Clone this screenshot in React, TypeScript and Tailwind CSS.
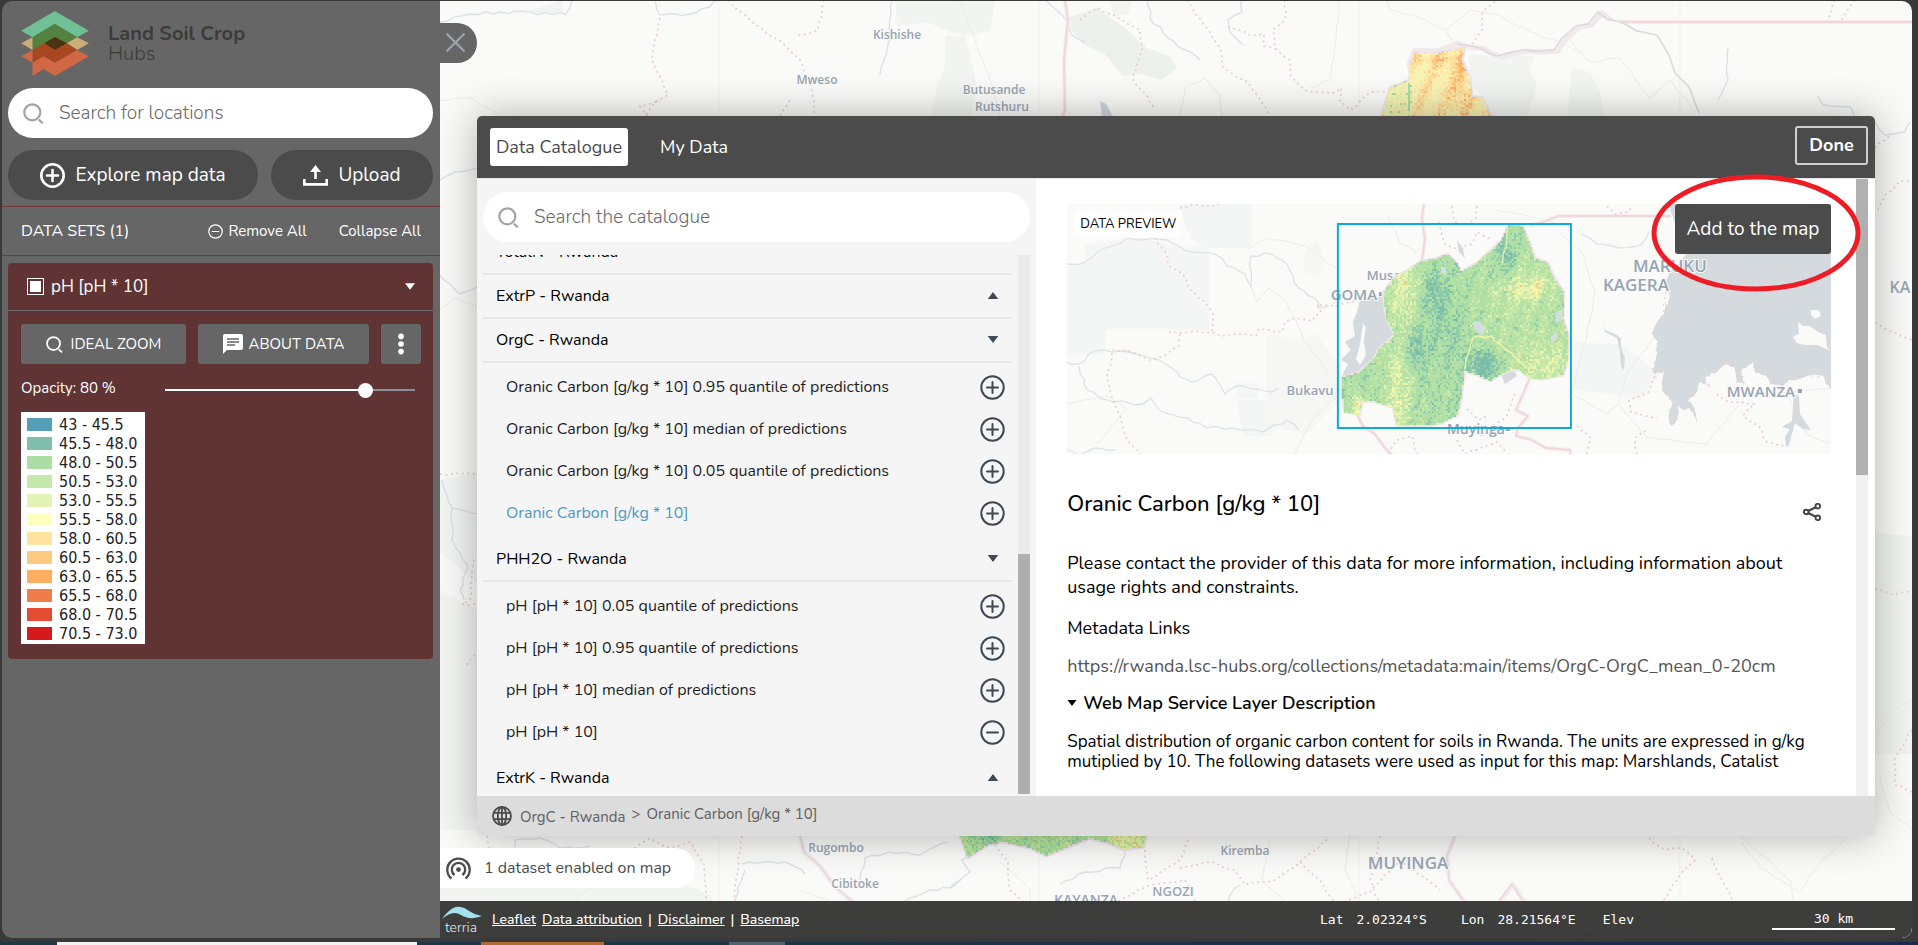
import type { ReactNode } from "react";

type Point = [number, number];

/* ---------- helpers for the map drawings ---------- */

function random(seed: number) {
  let s = seed;
  return () => {
    s = (s * 1664525 + 1013904223) % 4294967296;
    return s / 4294967296;
  };
}

function wiggle(points: Point[], amp: number, seed: number) {
  const rnd = random(seed);
  let d = `M${points[0][0]} ${points[0][1]}`;
  for (let i = 1; i < points.length; i++) {
    const [x0, y0] = points[i - 1];
    const [x1, y1] = points[i];
    const steps = Math.max(1, Math.round(Math.hypot(x1 - x0, y1 - y0) / 7));
    for (let k = 1; k <= steps; k++) {
      const t = k / steps;
      const j = k === steps ? 0 : amp;
      const x = x0 + (x1 - x0) * t + (rnd() - 0.5) * 2 * j;
      const y = y0 + (y1 - y0) * t + (rnd() - 0.5) * 2 * j;
      d += `L${x.toFixed(1)} ${y.toFixed(1)}`;
    }
  }
  return d;
}

function inside(poly: Point[], x: number, y: number) {
  let hit = false;
  for (let i = 0, j = poly.length - 1; i < poly.length; j = i++) {
    const [xi, yi] = poly[i];
    const [xj, yj] = poly[j];
    if (yi > y !== yj > y && x < ((xj - xi) * (y - yi)) / (yj - yi) + xi) hit = !hit;
  }
  return hit;
}

/* One path of square cells for each colour of the palette. */
function heatCells(
  poly: Point[],
  size: number,
  colours: string[],
  level: (x: number, y: number) => number,
  seed: number,
) {
  const rnd = random(seed);
  const paths = colours.map(() => "");
  const xs = poly.map((p) => p[0]);
  const ys = poly.map((p) => p[1]);
  for (let y = Math.min(...ys); y < Math.max(...ys); y += size) {
    for (let x = Math.min(...xs); x < Math.max(...xs); x += size) {
      const r = (rnd() + rnd() - 1) * 0.24;
      if (!inside(poly, x + size / 2, y + size / 2)) continue;
      const v = Math.min(0.999, Math.max(0, level(x, y) + r));
      paths[Math.floor(v * colours.length)] += `M${x} ${y}h${size}v${size}h-${size}z`;
    }
  }
  return paths.map((d, i) => ({ d, fill: colours[i] }));
}

const toPoints = (p: Point[]) => p.map((q) => q.join(",")).join(" ");

const blob = (x: number, y: number, cx: number, cy: number, rx: number, ry: number) =>
  Math.exp(-(((x - cx) / rx) ** 2) - ((y - cy) / ry) ** 2);

/* ---------- map data ---------- */

const rwanda: Point[] = [
  [316, 89], [328, 73], [341, 66], [353, 58], [371, 54], [381, 50], [390, 59], [394, 68], [410, 59], [421, 49],
  [435, 36], [441, 22], [455, 21], [463, 39], [468, 54], [481, 59], [487, 73], [497, 88], [496, 114], [502, 134],
  [500, 159], [496, 171], [476, 175], [463, 174], [453, 166], [443, 166], [433, 171], [423, 177], [410, 171], [398, 167],
  [396, 181], [394, 196], [391, 211], [375, 219], [360, 222], [330, 221], [326, 203], [306, 197], [295, 198], [293, 211],
  [278, 208], [275, 189], [276, 173], [291, 169], [306, 156], [313, 144], [328, 131], [320, 116], [318, 103],
];

const rwandaCells = heatCells(
  rwanda,
  2,
  ["#7bbda8", "#8ecba8", "#abdda4", "#b5e1a5", "#c7e8a8", "#e2f2b0", "#fdf6a8", "#fdc87c"],
  (x, y) =>
    0.36 +
    0.32 * blob(x, y, 336, 80, 17, 34) +
    0.3 * blob(x, y, 330, 185, 13, 55) +
    0.32 * blob(x, y, 462, 82, 24, 14) +
    0.5 * blob(x, y, 290, 201, 5, 12) +
    0.24 * blob(x, y, 480, 160, 30, 22) +
    0.1 * blob(x, y, 445, 110, 45, 60) -
    0.26 * blob(x, y, 366, 90, 13, 28) -
    0.24 * blob(x, y, 350, 145, 13, 22) -
    0.4 * blob(x, y, 416, 160, 16, 16) -
    0.3 * blob(x, y, 438, 52, 9, 20) -
    0.12 * blob(x, y, 385, 130, 14, 40) +
    0.05 * Math.sin(x / 3.1 + y / 11),
  7,
);

const northHeat: Point[] = [
  [1380, 122], [1390, 88], [1410, 80], [1410, 67], [1415, 52], [1430, 54], [1447, 51], [1465, 47], [1462, 60], [1470, 77],
  [1472, 97], [1482, 97], [1494, 122],
];
const northCells = heatCells(
  northHeat,
  2,
  ["#abdda4", "#e8f0b0", "#f7f3b4", "#fbf2b4", "#fdeaa8", "#fddd98", "#fdc881", "#fbb06a"],
  (x, y) =>
    x < 1407
      ? 0.26
      : 0.52 +
        0.26 * blob(x, y, 1460, 80, 9, 40) +
        0.2 * blob(x, y, 1440, 58, 30, 5) +
        0.14 * Math.sin(x / 4 + y / 9) -
        0.5 * blob(x, y, 1408, 100, 2, 30),
  21,
);

const southHeat: Point[] = [
  [958, 830], [968, 858], [988, 845], [1003, 842], [1030, 848], [1046, 856], [1068, 847], [1090, 838], [1108, 843],
  [1124, 850], [1144, 847], [1147, 830],
];
const southCells = heatCells(
  southHeat,
  2,
  ["#6fb7a6", "#8ccfa0", "#a5db9c", "#b4e39a", "#c3e89b", "#e2f2a4", "#fbf3a2", "#fdc377"],
  (x, y) => 0.4 - 0.28 * blob(x, y, 990, 836, 10, 10) + 0.36 * blob(x, y, 1128, 842, 20, 14) + 0.04 * Math.sin(x / 4),
  33,
);

const borders: Point[][] = [
  [[728, 0], [752, 22], [775, 38], [800, 60], [812, 90], [815, 116]],
  [[824, 0], [818, 30], [795, 36]],
  [[660, 18], [652, 60], [668, 95], [655, 102], [645, 116]],
  [[1187, 0], [1204, 25], [1220, 48], [1222, 66], [1235, 76], [1248, 82], [1266, 108], [1270, 116]],
  [[1285, 0], [1285, 20], [1273, 30], [1275, 48], [1290, 60], [1291, 76], [1304, 90], [1335, 93], [1341, 88], [1340, 102], [1350, 110], [1371, 92], [1388, 92]],
  [[1228, 27], [1250, 35], [1264, 34], [1264, 46], [1275, 49]],
  [[1080, 20], [1098, 8], [1110, 14], [1140, 30], [1142, 50], [1132, 78], [1155, 108]],
  [[1495, 2], [1482, 14], [1482, 30], [1472, 44]],
  [[1835, 0], [1828, 20]], [[1855, 0], [1840, 22]],
  [[648, 116], [640, 106], [660, 101]], [[780, 116], [790, 100]],
  [[440, 474], [477, 474]], [[474, 560], [470, 600], [462, 604], [477, 604]],
  [[475, 655], [465, 668]],
  [[487, 836], [490, 850]], [[630, 852], [650, 838], [670, 848], [690, 842], [704, 864], [706, 901], [706, 938]],
  [[742, 836], [736, 880], [735, 901], [730, 938]],
  [[995, 845], [1008, 862], [1010, 890], [1028, 905]],
  [[1145, 850], [1148, 880], [1180, 860], [1190, 838]],
  [[1180, 868], [1210, 862], [1235, 870], [1245, 885], [1275, 880], [1300, 862], [1330, 838]],
  [[1118, 901], [1150, 885], [1185, 880], [1200, 910], [1240, 930]],
  [[1300, 862], [1320, 880], [1335, 905], [1370, 892], [1400, 860], [1440, 890]],
  [[1380, 836], [1370, 880], [1390, 938]],
  [[1649, 838], [1665, 850], [1682, 848], [1695, 860], [1680, 875], [1665, 898], [1650, 925]],
  [[1712, 858], [1722, 880], [1735, 905], [1740, 938]],
  [[1875, 589], [1890, 594], [1912, 592]], [[1912, 730], [1895, 758], [1895, 785], [1912, 792]],
  [[1875, 148], [1890, 135]], [[1878, 210], [1886, 194], [1900, 181], [1912, 182]], [[1875, 323], [1895, 333], [1912, 340]],
];

const rivers: Point[][] = [
  [[440, 22], [470, 14], [500, 12], [566, 14], [572, 0]],
  [[655, 0], [660, 15], [690, 14], [720, 0]],
  [[892, 0], [888, 45], [880, 75]],
  [[1045, 0], [1062, 15], [1072, 35], [1085, 42]],
  [[1148, 0], [1150, 18], [1168, 38], [1200, 60]],
  [[1241, 0], [1242, 12], [1228, 20], [1230, 32], [1243, 45]],
  [[1728, 48], [1728, 80], [1718, 100]],
  [[440, 180], [455, 172], [477, 168]],
  [[440, 275], [460, 294], [477, 287]],
  [[442, 480], [452, 508], [477, 514]], [[452, 508], [452, 540], [468, 566], [460, 590], [464, 600]],
  [[512, 860], [515, 840], [540, 838], [560, 848], [590, 846]],
  [[745, 870], [735, 900], [750, 938]], [[742, 864], [765, 862], [790, 864], [805, 874]],
  [[860, 880], [865, 858], [890, 852], [920, 855], [948, 842]],
  [[950, 888], [970, 872], [962, 860], [972, 856]], [[905, 901], [930, 890], [950, 888], [960, 880]],
  [[1060, 884], [1085, 872], [1120, 868], [1125, 850]],
  [[1225, 938], [1230, 895], [1240, 885]],
  [[1818, 96], [1822, 104], [1850, 107], [1855, 118]],
  [[1875, 122], [1885, 135], [1905, 132], [1910, 122]],
];

const roads: Point[][] = [
  [[1340, 0], [1336, 40], [1330, 80], [1310, 88]],
  [[1387, 0], [1390, 10], [1420, 18], [1446, 30], [1470, 10], [1500, 16], [1530, 32], [1560, 42], [1580, 52]],
  [[1446, 30], [1452, 40]], [[960, 0], [975, 40], [990, 80], [1000, 116]],
  [[1570, 40], [1590, 62], [1620, 58], [1650, 98], [1670, 80], [1690, 105]],
  [[1180, 116], [1185, 88], [1205, 78], [1220, 95], [1222, 116]],
  [[440, 100], [470, 98], [500, 116]], [[1740, 836], [1790, 880], [1800, 938]],
  [[1848, 838], [1820, 862], [1800, 892], [1760, 868], [1742, 842]],
  [[1875, 735], [1895, 710], [1912, 700]], [[1880, 780], [1890, 812], [1912, 830]],
  [[1000, 862], [1030, 890], [1035, 938]], [[800, 890], [830, 901], [850, 938]],
  [[1350, 836], [1345, 870], [1360, 900]], [[1270, 840], [1262, 880], [1290, 905], [1285, 938]],
  [[560, 938], [580, 895], [610, 870], [640, 860]], [[440, 310], [455, 298], [477, 306]],
];

function MapLabel({ x, y, size, children }: { x: number; y: number; size: number; children: ReactNode }) {
  return (
    <text
      x={x}
      y={y}
      fontSize={size}
      textAnchor="middle"
      fontWeight="600"
      fill="#97a5b3"
      stroke="#fafaf8"
      strokeWidth="2"
      paintOrder="stroke"
      className="font-['Open_Sans',sans-serif]"
    >
      {children}
    </text>
  );
}

function BaseMap() {
  return (
    <svg
      className="absolute inset-0 size-full"
      viewBox="440 1 1472 937"
      preserveAspectRatio="xMidYMid slice"
      role="img"
      aria-label="Map"
    >
      <rect x="440" y="0" width="1472" height="940" fill="#fafaf8" />
      <g fill="#f1f4f1">
        <path d="M895 0h100l-5 30-20 6-18-4-25-10-30 4z" />
        <path d="M945 36h20l12 50-6 30h-40l6-30 8-20z" />
        <path d="M1110 0h22l-4 14-14 2z" />
        <path d="M1468 55l67 1-6 12 8 18-10 30h-34l-14-22-8-10z" />
        <path d="M1572 68l18 4 10 20 5 24h-38z" />
        <path d="M525 12l38-12v14z" />
        <path d="M440 480l37-8v110l-37-30zM440 590l37 20v220h-37z" opacity=".8" />
        <path d="M1875 533l37 3v218h-37z" />
        <path d="M440 880l60-4 40-10 60 12 40-8 60 20-20 50H440z" />
        <path d="M620 895l60-12 30 12 20 43h-120z" />
      </g>
      <path d="M1067 18l30-10 28 20 22 20 22 8 8 12-16 12-20-6-18 2-18-22-22-10-14-18z" fill="#ecf1ed" />
      <path d="M1100 101l6 3 8 14h-12z" fill="#cfd6da" />
      <g fill="none" stroke="#f2f1ee" strokeWidth="1">
        <path d="M719 0v938M1039 0v938M1359 0v938M1680 0v938" />
      </g>
      <g fill="none" stroke="#ececea" strokeWidth="1">
        {roads.map((r, i) => (
          <path key={i} d={wiggle(r, 1, i + 90)} />
        ))}
      </g>
      <g fill="none" stroke="#dbe2e6" strokeWidth="1.4">
        {rivers.map((r, i) => (
          <path key={i} d={wiggle(r, 1.6, i + 40)} />
        ))}
      </g>
      <g fill="none" stroke="#eccdd2" strokeWidth="1.7" strokeDasharray="2 3.5">
        {borders.map((r, i) => (
          <path key={i} d={wiggle(r, 1.2, i + 5)} />
        ))}
      </g>
      <g fill="none" strokeLinejoin="round">
        <path d="M1065 0l3 20-4 40 1 50-4 10M1620 22h292" stroke="#f9ebec" strokeWidth="4" />
        <path d="M1065 0l3 20-4 40 1 50-4 10M1620 22h292" stroke="#f0d8db" strokeWidth="2" />
        <path
          d="M1412 76l-3-12 6-14 20 1 14-4 8-4 14 5 13 0 8 6 10 3 10-3 14-3 14 1 18-1 8-12 14-12 12-2 10-12 9 7"
          stroke="#f1eaec"
          strokeWidth="5"
        />
        <path
          d="M1457 44l10 1 13 3 8 5 10 3 10-3 14-3 14 1 18-1 8-12 14-12 12-2 10-12 9 7 14 3 16 9 20 4 12 20 6 18 14 14 10 26"
          stroke="#dcd8dc"
          strokeWidth="1.6"
        />
        <path
          d="M800 836l4 16 16 14 14 20 30 25 10 27M1455 836l-8 20 2 24 14 20 18 20 14-12 18-24 18 28 40 24 50-6"
          stroke="#f5edef"
          strokeWidth="5"
        />
        <path d="M800 836l4 16 16 14 14 20 30 25 10 27M1455 836l-8 20 2 24 14 20" stroke="#e2dade" strokeWidth="1.5" />
        <path d="M1480 920l14-12 18-24 18 28 40 24 50-6" stroke="#f0d8db" strokeWidth="1.8" />
      </g>
      <g strokeWidth="3" strokeLinejoin="round">
        <polygon points={toPoints(northHeat)} fill="#fdeeae" stroke="#ece3ea" />
        <polygon points={toPoints(southHeat)} fill="#bfe6a0" stroke="#ece3ea" />
      </g>
      {[...northCells, ...southCells].map((c, i) => (
        <path key={i} d={c.d} fill={c.fill} />
      ))}
      <MapLabel x={897} y={39} size={12}>Kishishe</MapLabel>
      <MapLabel x={817} y={84} size={12}>Mweso</MapLabel>
      <MapLabel x={994} y={94} size={12}>Butusande</MapLabel>
      <MapLabel x={1002} y={111} size={12}>Rutshuru</MapLabel>
      <MapLabel x={836} y={852} size={12}>Rugombo</MapLabel>
      <MapLabel x={855} y={888} size={12}>Cibitoke</MapLabel>
      <MapLabel x={1245} y={855} size={12}>Kiremba</MapLabel>
      <MapLabel x={1408} y={869} size={17}>MUYINGA</MapLabel>
      <MapLabel x={1173} y={896} size={13}>NGOZI</MapLabel>
      <MapLabel x={1086} y={905} size={14}>KAYANZA</MapLabel>
      <MapLabel x={1900} y={293} size={16}>KA</MapLabel>
    </svg>
  );
}

const previewBorders: Point[][] = [
  [[110, 8], [112, 4], [125, 1], [140, 2], [152, 1]],
  [[88, 34], [100, 50], [102, 62], [116, 70], [122, 85], [138, 98], [146, 110], [145, 128]],
  [[102, 128], [145, 128], [155, 132], [170, 130], [190, 131], [192, 125], [215, 128], [218, 118], [228, 114], [245, 117], [254, 108], [250, 101], [270, 102], [290, 96]],
  [[113, 130], [112, 142], [100, 150], [82, 156], [60, 146], [45, 146], [44, 160], [40, 170], [44, 190], [50, 205], [55, 220], [60, 236], [74, 250]],
  [[385, 2], [388, 18], [400, 20], [409, 14], [410, 2]],
  [[372, 18], [378, 40], [392, 45], [405, 40], [410, 28], [425, 36]],
  [[540, 2], [548, 10], [562, 8], [565, 2]],
  [[414, 232], [440, 212], [448, 190]], [[400, 205], [412, 216], [420, 212]],
  [[322, 250], [330, 236], [345, 232], [350, 250]], [[390, 236], [398, 250], [430, 238], [440, 250]],
  [[510, 222], [524, 234], [520, 250]], [[588, 172], [582, 188], [562, 196], [564, 208], [590, 214]],
  [[570, 250], [568, 234], [580, 226]], [[650, 190], [662, 198], [688, 200], [676, 212], [692, 222], [700, 238], [718, 242]],
];

const previewRivers: Point[][] = [
  [[0, 60], [18, 58], [38, 44], [60, 34], [100, 36], [125, 48], [148, 50], [160, 62], [178, 70], [184, 82], [184, 52], [205, 50], [220, 60], [232, 84], [248, 94], [252, 104], [262, 102]],
  [[0, 158], [12, 160], [22, 150], [38, 146], [62, 148], [92, 156], [110, 168], [125, 178], [145, 170], [158, 190], [170, 182], [205, 188], [212, 184]],
  [[12, 162], [20, 186], [40, 196], [76, 200], [84, 194], [92, 206], [120, 214], [140, 224], [165, 224], [196, 228], [220, 216], [232, 226]],
  [[0, 246], [12, 252], [28, 244], [48, 246]], [[515, 30], [530, 40], [552, 44], [575, 40], [582, 28]],
];

const previewRoads: Point[][] = [
  [[182, 45], [200, 34], [240, 42], [262, 60], [272, 66]],
  [[184, 82], [190, 98], [202, 84], [216, 94], [225, 110], [240, 140], [255, 160], [262, 172]],
  [[0, 200], [40, 192], [60, 205], [30, 240]], [[275, 190], [250, 210], [235, 235], [228, 250]],
  [[490, 26], [516, 50], [528, 90], [520, 130], [505, 190]],
  [[505, 190], [540, 210], [552, 200], [580, 234], [640, 240], [680, 190], [720, 188], [764, 184]],
  [[430, 6], [470, 14], [490, 20]], [[320, 10], [334, 40], [350, 48]], [[590, 130], [560, 170], [552, 200]],
  [[720, 190], [740, 230], [764, 240]],
];

const victoriaShore: Point[] = [
  [603, 0], [608, 20], [620, 50], [603, 68], [598, 93], [597, 110], [585, 130], [591, 138], [588, 158], [586, 169],
  [597, 168], [596, 188], [606, 200], [602, 210], [604, 222], [611, 212], [610, 200], [616, 206], [622, 204], [630, 217],
  [627, 204], [620, 196], [630, 188], [632, 178], [644, 184], [638, 174], [650, 168], [659, 160], [668, 164], [670, 178],
  [677, 179], [674, 166], [686, 158], [688, 168], [700, 172], [704, 180], [716, 182], [722, 176], [740, 172], [757, 172],
  [764, 184],
];
const victoria = `${wiggle(victoriaShore, 1.8, 17)}V0z`;

const kivu =
  "M293 96L318 92L320 116L328 131L313 144L306 156L291 169L275 172L281 160L274 156L284 146L278 138L288 132L286 118L290 108z";

function PreviewMap() {
  return (
    <svg
      className="block h-[250px] w-full bg-[#fafaf8]"
      viewBox="0 0 764 250"
      preserveAspectRatio="xMidYMid slice"
      role="img"
      aria-label="Data preview map"
    >
      <g fill="#f3f6f4">
        <path d="M110 0h75v44h-40l-20-8zM18 40l60-6 26 8h38v84H38v24l-38 1V62l18-4z" />
        <path d="M170 178h20v16h-20zM170 196h36v36h-30z" />
        <path d="M508 138l48 3 36 30-20 24-66-10z" />
      </g>
      <path d="M240 42l10-6 8 20-8 16-14-4zM200 130l30 6 20-6 20 30 10 30-40 40-40-8z" fill="#f6f6f4" />
      <g fill="none" stroke="#ececea" strokeWidth="1">
        {previewRoads.map((r, i) => (
          <path key={i} d={wiggle(r, 0.8, i + 11)} />
        ))}
      </g>
      <g fill="none" stroke="#dce3e6" strokeWidth="1.3">
        {previewRivers.map((r, i) => (
          <path key={i} d={wiggle(r, 1.8, i + 61)} />
        ))}
      </g>
      <g fill="none" strokeLinejoin="round">
        <path
          d="M357 0l-2 15 3 20-3 22M464 22l12-4 16-6h112M290 210l6 12 12 8 10 14 8 8M463 174l-6 14-8 18 12 6-10 12-2 8 16 4 14 8 24 2 2 10"
          stroke="#f8ecee"
          strokeWidth="4"
        />
        <path
          d="M357 0l-2 15 3 20-3 22M464 22l12-4 16-6h112M290 210l6 12 12 8 10 14 8 8M463 174l-6 14-8 18 12 6-10 12-2 8 16 4 14 8 24 2 2 10"
          stroke="#efd6d9"
          strokeWidth="1.8"
        />
      </g>
      <g fill="none" stroke="#eacbd0" strokeWidth="1.6" strokeDasharray="2 3.5">
        {previewBorders.map((r, i) => (
          <path key={i} d={wiggle(r, 1.1, i + 3)} />
        ))}
      </g>
      <g fill="#d4dadd">
        <path d={kivu} />
        <path d={victoria} />
        <path d="M535 114l3 12 10 4 6 4 0 10 4 10-1 12-3-4-1-14-3-14-12-6z" />
        <path d="M727 190l5 2 1 18 11 16-8-1-8-6-6 22-3 2-1-10 5-8-8-2 10-6z" />
        <path d="M390 36l6 8 2 10-6-6zM484 92l8-6 4 6-8 6zM482 122l12-8 2 10-10 8zM434 170l12-6 4 8-12 8z" />
      </g>
      <g fill="#fafaf8">
        <path d="M296 119l3 4-2 14 2 14-6 10-4-6 4-14z" />
        <path d="M731 118l5 4 7 0 8 6 8 3 1 12 4 4-14-6-12 0-8-2-4-6 6-3zM744 106l8 0 2 6-6 3-4-4zM601 84l2 8-3 10-3-8z" />
      </g>
      <g fill="none" stroke="#e8c9cd" strokeWidth="1.2" strokeDasharray="1.5 5">
        <path d={wiggle(victoriaShore.slice(3), 1.8, 17)} />
      </g>
      <MapLabel x={603} y={68} size={17}>MARUKU</MapLabel>
      <MapLabel x={569} y={87} size={17}>KAGERA</MapLabel>
      <MapLabel x={694} y={193} size={15}>MWANZA</MapLabel>
      <rect x="731" y="185" width="4" height="4" fill="#97a5b3" />
      <MapLabel x={328} y={76} size={13}>Musanze</MapLabel>
      <MapLabel x={287} y={96} size={15}>GOMA</MapLabel>
      <rect x="312" y="88" width="4" height="4" fill="#97a5b3" />
      <MapLabel x={243} y={191} size={13}>Bukavu</MapLabel>
      <MapLabel x={409} y={230} size={14}>Muyinga</MapLabel>
      <rect x="439" y="223" width="4" height="4" fill="#97a5b3" />
      <polygon points={toPoints(rwanda)} fill="#b7e2a6" stroke="#f0e4e8" strokeWidth="3" strokeLinejoin="round" />
      {rwandaCells.map((c, i) => (
        <path key={i} d={c.d} fill={c.fill} />
      ))}
      <path d="M406 118l6-1 6 8-2 6-8-4zM374 62l5 2 0 8-5-3zM489 108l7-2-1 10-7 4zM484 132l6-3 0 6-6 4z" fill="#d6dde0" />
      <path
        d={wiggle([[398, 165], [402, 148], [406, 134], [424, 132], [446, 150], [460, 164]], 1.5, 9)}
        fill="none"
        stroke="#eef3a8"
        strokeWidth="1.6"
      />
      <path d={wiggle([[441, 24], [439, 44], [434, 62]], 1.2, 4)} fill="none" stroke="#dcefad" strokeWidth="1.4" />
      <rect x="271" y="20" width="233" height="204" fill="none" stroke="#0cabd9" strokeWidth="2" />
    </svg>
  );
}

/* ---------- icons ---------- */

function SearchIcon({ className }: { className: string }) {
  return (
    <svg viewBox="0 0 21 21" className={className} fill="none" stroke="currentColor" strokeWidth="2.2" aria-hidden="true">
      <circle cx="9.3" cy="9.3" r="8" />
      <path d="M15.8 16.6l4 3.6" />
    </svg>
  );
}

function CircleIcon({ className, minus, width = 2 }: { className: string; minus?: boolean; width?: number }) {
  return (
    <svg viewBox="0 0 25 25" className={className} fill="none" stroke="currentColor" strokeWidth={width} aria-hidden="true">
      <circle cx="12.5" cy="12.5" r="11.2" />
      <path d="M7 12.5h11" strokeLinecap="round" />
      {!minus && <path d="M12.5 7v11" strokeLinecap="round" />}
    </svg>
  );
}

function Triangle({ up, className }: { up?: boolean; className: string }) {
  return (
    <svg viewBox="0 0 12 8" className={className} fill="currentColor" aria-hidden="true">
      <path d={up ? "M6 0l6 8H0z" : "M0 0h12L6 8z"} />
    </svg>
  );
}

function Logo() {
  return (
    <svg viewBox="63 33 203 195" className="h-[65px] w-[68px]" aria-hidden="true">
      <path fill="#6fc094" d="M63 92L164 33l102 59-35 20-67-40-67 40z" />
      <path fill="#56823f" d="M97 112l67-40 67 40-31 18-36-19-32 19-35 20z" />
      <path fill="#cbae78" d="M63 130l34-18v38zM266 130l-35-18-31 18 31 20z" />
      <path fill="#4a3212" d="M132 130l32-19 36 19-36 20z" />
      <path fill="#a84720" d="M97 150l35-20 32 20 36-20 31 20-67 38-34-19-33 19z" />
      <path fill="#d06846" d="M63 169l34-19v38l33-19 34 19 67-38 35 19-102 59-34-21-33 21v-40z" />
    </svg>
  );
}

/* ---------- side panel ---------- */

const legend: [string, string][] = [
  ["#559eb7", "43 - 45.5"],
  ["#80bfab", "45.5 - 48.0"],
  ["#abdda4", "48.0 - 50.5"],
  ["#c7e8ad", "50.5 - 53.0"],
  ["#e3f3b6", "53.0 - 55.5"],
  ["#ffffbf", "55.5 - 58.0"],
  ["#fee4a0", "58.0 - 60.5"],
  ["#fec980", "60.5 - 63.0"],
  ["#fdae61", "63.0 - 65.5"],
  ["#f07c4a", "65.5 - 68.0"],
  ["#e44b33", "68.0 - 70.5"],
  ["#d7191c", "70.5 - 73.0"],
];

function SidePanel() {
  return (
    <aside className="flex w-[438px] shrink-0 flex-col rounded-l-[10px] bg-[#666] pr-px text-white">
      <div className="flex items-center gap-[19px] px-[19px] pt-[10px]">
        <Logo />
        <div className="text-[20px] leading-5 text-[#3c3c3b]">
          <div className="font-bold">Land Soil Crop</div>
          <div className="font-light">Hubs</div>
        </div>
      </div>

      <label className="mx-1.5 mt-3 flex h-[50px] items-center gap-[15px] rounded-full bg-white px-[15px]">
        <SearchIcon className="size-[21px] text-[#a0a3ac]" />
        <input
          type="text"
          aria-label="Search for locations"
          placeholder="Search for locations"
          className="min-w-0 flex-1 bg-transparent text-[19px] font-light text-[#333] outline-none placeholder:text-[#6a6a6a]"
        />
      </label>

      <div className="mx-1.5 mt-3 flex gap-[13px]">
        <button className="flex h-[50px] flex-1 items-center justify-center gap-2.5 rounded-full bg-[#4b4b4b] text-[19px]">
          <CircleIcon className="size-[25px]" width={2.6} />
          Explore map data
        </button>
        <button className="flex h-[50px] w-[162px] items-center justify-center gap-2.5 rounded-full bg-[#4b4b4b] text-[19px]">
          <svg viewBox="0 0 25 21" className="h-[21px] w-[25px]" aria-hidden="true">
            <path d="M12.5 14V4" stroke="#fff" strokeWidth="2.6" fill="none" />
            <path d="M12.5 0l5.5 7h-11z" fill="#fff" />
            <path d="M1.3 14v5.4h22.4V14" stroke="#fff" strokeWidth="2.6" fill="none" />
          </svg>
          Upload
        </button>
      </div>

      <div className="-mr-px mt-1.5 flex h-[50px] items-center border-y border-[#703838] pr-[19px] pl-[19px]">
        <h2 className="flex-1 text-[16px]">DATA SETS (1)</h2>
        <button className="flex items-center gap-[5px] text-[15px]">
          <CircleIcon minus className="size-[15px]" />
          Remove All
        </button>
        <button className="ml-8 text-[15px]">Collapse All</button>
      </div>

      <section className="mx-1.5 mt-[7px] rounded-[4px] bg-[#603434] pb-[15px]">
        <div className="flex h-[48px] items-center border-b border-[#6f6f6f] pr-[18px] pl-[19px]">
          <label className="flex flex-1 items-center gap-[7px] text-[17px]">
            <input
              type="checkbox"
              defaultChecked
              className="size-[17px] appearance-none border border-white bg-clip-content p-[2px] checked:bg-white"
            />
            pH [pH * 10]
          </label>
          <button aria-label="Collapse pH">
            <Triangle className="h-[7px] w-[10px]" />
          </button>
        </div>

        <div className="pt-[13px] pr-3 pl-[13px]">
          <div className="flex gap-3 text-[15px]">
            <button className="flex h-10 w-[165px] items-center justify-center gap-2 rounded-[3px] bg-[#666]">
              <SearchIcon className="size-[17px]" />
              IDEAL ZOOM
            </button>
            <button className="flex h-10 flex-1 items-center justify-center gap-1.5 rounded-[3px] bg-[#666]">
              <svg viewBox="0 0 20 20" className="size-5" aria-hidden="true">
                <path d="M2 0h16a2 2 0 0 1 2 2v12a2 2 0 0 1-2 2H4l-4 4V2a2 2 0 0 1 2-2z" fill="#fff" />
                <path d="M4 5h12M4 8h12M4 11h8" stroke="#666" strokeWidth="1.6" />
              </svg>
              ABOUT DATA
            </button>
            <button aria-label="More options" className="flex size-10 items-center justify-center rounded-[3px] bg-[#666]">
              <svg viewBox="0 0 6 22" className="h-[22px] w-1.5" fill="currentColor" aria-hidden="true">
                <circle cx="3" cy="3.4" r="2.8" />
                <circle cx="3" cy="11" r="2.8" />
                <circle cx="3" cy="18.6" r="2.8" />
              </svg>
            </button>
          </div>

          <div className="mt-3.5 flex h-5 items-center justify-between">
            <label htmlFor="opacity" className="text-[15px]">
              Opacity: 80 %
            </label>
            <input
              id="opacity"
              type="range"
              min={0}
              max={100}
              defaultValue={80}
              className="-mr-0.5 mt-1 h-0.5 w-[266px] appearance-none bg-[linear-gradient(to_right,transparent_8px,#fff_8px,#fff_208px,#8c8f98_208px,#8c8f98_258px,transparent_258px)] [&::-webkit-slider-thumb]:size-[15px] [&::-webkit-slider-thumb]:appearance-none [&::-webkit-slider-thumb]:rounded-full [&::-webkit-slider-thumb]:bg-white"
            />
          </div>

          <ul className="mt-3.5 w-[124px] bg-white pt-[3px] pb-px font-['DejaVu_Sans_Condensed','DejaVu_Sans',sans-serif] text-[16px] leading-[19px] text-[#222]">
            {legend.map(([colour, text]) => (
              <li key={text} className="flex h-[19px] items-center gap-[7px] pl-1.5">
                <span className="h-[13px] w-[25px]" style={{ backgroundColor: colour }} />
                {text}
              </li>
            ))}
          </ul>
        </div>
      </section>
    </aside>
  );
}

/* ---------- catalogue dialog ---------- */

function Group({ name, open, children }: { name: string; open?: boolean; children?: ReactNode }) {
  return (
    <li>
      <button className="flex h-11 w-full items-center justify-between border-b-2 border-[#e7e7e7] pr-[13px] pl-[13px] text-left text-[16px] text-black">
        {name}
        <Triangle up={!open} className="mb-0.5 h-[7px] w-3 text-[#3f4854]" />
      </button>
      {children && <ul className="pt-[3px] pb-1">{children}</ul>}
    </li>
  );
}

function Item({ name, active, added }: { name: string; active?: boolean; added?: boolean }) {
  return (
    <li className="flex h-[42px] items-center justify-between pr-[7px] pl-[23px] text-[16px]">
      <button className={active ? "text-[#519ac2]" : "text-[#1f1f1f]"}>{name}</button>
      <button aria-label={added ? `Remove ${name}` : `Add ${name}`} className="text-[#3f4854]">
        <CircleIcon minus={added} className="size-[25px]" />
      </button>
    </li>
  );
}

function CataloguePane() {
  return (
    <div className="flex w-2/5 flex-col bg-[#f5f5f5] px-1.5 pt-[13px]">
      <label className="flex h-[50px] shrink-0 items-center gap-[15px] rounded-full bg-white px-[15px]">
        <SearchIcon className="size-[21px] text-[#a0a3ac]" />
        <input
          type="text"
          aria-label="Search the catalogue"
          placeholder="Search the catalogue"
          className="min-w-0 flex-1 bg-transparent text-[19px] font-light text-[#333] outline-none placeholder:text-[#6a6a6a]"
        />
      </label>
      <div className="mt-[13px] flex min-h-0 flex-1 gap-1.5">
        <div className="min-w-0 flex-1 overflow-hidden">
          <ul className="-mt-6">
            <Group name="TotalN - Rwanda" />
            <Group name="ExtrP - Rwanda" />
            <Group name="OrgC - Rwanda" open>
              <Item name="Oranic Carbon [g/kg * 10] 0.95 quantile of predictions" />
              <Item name="Oranic Carbon [g/kg * 10] median of predictions" />
              <Item name="Oranic Carbon [g/kg * 10] 0.05 quantile of predictions" />
              <Item name="Oranic Carbon [g/kg * 10]" active />
            </Group>
            <Group name="PHH2O - Rwanda" open>
              <Item name="pH [pH * 10] 0.05 quantile of predictions" />
              <Item name="pH [pH * 10] 0.95 quantile of predictions" />
              <Item name="pH [pH * 10] median of predictions" />
              <Item name="pH [pH * 10]" added />
            </Group>
            <Group name="ExtrK - Rwanda" />
          </ul>
        </div>
        <div className="mb-0.5 flex w-3 flex-col justify-end bg-[#ebebeb]">
          <div className="h-[240px] bg-[#afafaf]" />
        </div>
      </div>
    </div>
  );
}

function PreviewPane() {
  return (
    <div className="flex w-3/5 bg-white pr-[7px]">
      <div className="min-w-0 flex-1 overflow-hidden pt-[25px] pr-[25px] pl-[31px] text-black">
        <div className="relative">
          <PreviewMap />
          <div className="absolute top-1.5 left-[7px] bg-white px-1.5 text-[13px] leading-7">DATA PREVIEW</div>
          <button className="absolute top-0 right-0 h-[50px] w-[156px] rounded-[3px] bg-[#4b4b4b] text-[19px] whitespace-nowrap text-white">
            Add to the map
          </button>
        </div>

        <div className="mt-9 flex items-start justify-between pr-2.5">
          <h3 className="text-[22px] leading-7 font-medium">Oranic Carbon [g/kg * 10]</h3>
          <button aria-label="Share" className="mt-[13px] text-[#444]">
            <svg viewBox="0 0 18 18" className="size-[18px]" fill="none" stroke="currentColor" strokeWidth="1.9" aria-hidden="true">
              <circle cx="3.2" cy="9" r="2.3" />
              <circle cx="14.8" cy="3.2" r="2.3" />
              <circle cx="14.8" cy="14.8" r="2.3" />
              <path d="M5.3 7.9l7.4-3.7M5.3 10.1l7.4 3.7" strokeWidth="2.2" />
            </svg>
          </button>
        </div>
        <p className="mt-[30px] text-[18px] leading-6">
          Please contact the provider of this data for more information, including information about usage rights and
          constraints.
        </p>
        <h4 className="mt-[17px] text-[18px] leading-6">Metadata Links</h4>
        <a
          href="https://rwanda.lsc-hubs.org/collections/metadata:main/items/OrgC-OrgC_mean_0-20cm"
          className="mt-3.5 block text-[18px] leading-6 text-[#555]"
        >
          https://rwanda.lsc-hubs.org/collections/metadata:main/items/OrgC-OrgC_mean_0-20cm
        </a>
        <button className="mt-[13px] flex items-center gap-1.5 text-[18px] leading-6 font-semibold">
          <Triangle className="h-1.5 w-2.5" />
          Web Map Service Layer Description
        </button>
        <p className="mt-[17px] text-[17px] leading-5">
          Spatial distribution of organic carbon content for soils in Rwanda. The units are expressed in g/kg mutiplied by
          10. The following datasets were used as input for this map: Marshlands, Catalist
        </p>
      </div>
      <div className="w-3 bg-[#f1f1f1]">
        <div className="h-[296px] bg-[#b0b0b0]" />
      </div>
    </div>
  );
}

function CatalogueDialog() {
  return (
    <div
      role="dialog"
      aria-label="Data Catalogue"
      className="absolute inset-x-[37px] top-[115px] bottom-[102px] flex flex-col overflow-hidden rounded-[5px] shadow-[0_0_40px_rgba(0,0,0,0.3)]"
    >
      <div className="flex h-[62px] shrink-0 items-center justify-between bg-[#4b4b4b] pr-[7px] pl-[13px] text-[18px] text-white">
        <div className="flex gap-[26px]">
          <button className="h-[38px] rounded-[3px] bg-white px-1.5 text-[#4b4b4b]">Data Catalogue</button>
          <button className="h-[38px] px-1.5">My Data</button>
        </div>
        <button className="mb-1 h-[39px] w-[73px] rounded-[3px] border-2 border-[#cfcfcf] font-bold">Done</button>
      </div>
      <div className="flex min-h-0 flex-1 border-t border-[#e5e5e5]">
        <CataloguePane />
        <PreviewPane />
      </div>
      <div className="flex h-10 shrink-0 items-center bg-[#dcdcdc] pl-[15px] text-[15px] text-[#606060]">
        <svg viewBox="0 0 20 20" className="size-5 text-[#4b4b4b]" fill="none" stroke="currentColor" strokeWidth="1.8" aria-hidden="true">
          <circle cx="10" cy="10" r="9" />
          <ellipse cx="10" cy="10" rx="4.2" ry="9" />
          <path d="M1.8 6.8h16.4M1.8 13.2h16.4M10 1v18" />
        </svg>
        <a href="#orgc" className="mt-0.5 ml-2">
          OrgC - Rwanda
        </a>
        <span className="mx-1.5 mb-1">&gt;</span>
        <span className="mb-1">Oranic Carbon [g/kg * 10]</span>
      </div>
      <svg
        viewBox="0 0 210 118"
        className="pointer-events-none absolute top-[58px] right-[14px] h-[118px] w-[210px]"
        aria-hidden="true"
      >
        <ellipse cx="105" cy="59" rx="102" ry="56" fill="none" stroke="#ee1c25" strokeWidth="5" />
      </svg>
    </div>
  );
}

/* ---------- page ---------- */

function BottomBar() {
  return (
    <footer className="absolute inset-x-0 bottom-0 flex h-[37px] items-center rounded-br-[10px] bg-[#333331]/95 pr-[17px] text-white">
      <svg viewBox="0 0 42 30" className="ml-0.5 h-[30px] w-[42px] overflow-visible" aria-hidden="true">
        <path d="M0 14C7 5 12 1 18 2c8 1 10 7 22 9-9 3-14 3-21-1C13 6 7 8 0 14z" fill="#a6dfee" />
        <text x="3" y="27" fontSize="14" fontWeight="300" fill="#e8e8e8" className="font-[Nunito,Lato,sans-serif]">
          terria
        </text>
      </svg>
      <nav className="ml-2 flex items-center gap-1.5 text-[14px] font-medium">
        <a href="#leaflet" className="underline">Leaflet</a>
        <a href="#attribution" className="underline">Data attribution</a>
        <span>|</span>
        <a href="#disclaimer" className="underline">Disclaimer</a>
        <span>|</span>
        <a href="#basemap" className="underline">Basemap</a>
      </nav>
      <div className="ml-auto flex items-center font-['DejaVu_Sans_Mono',monospace] text-[13px]">
        <span>Lat</span>
        <span className="ml-[13px]">2.02324°S</span>
        <span className="ml-[34px]">Lon</span>
        <span className="ml-[13px]">28.21564°E</span>
        <span className="ml-[27px]">Elev</span>
        <div className="ml-[138px] w-[123px] border-b-2 border-white text-center leading-[19px]">30 km</div>
      </div>
    </footer>
  );
}

export default function App() {
  return (
    <div className="flex h-screen flex-col bg-[#393939] font-[Nunito,'Open_Sans',sans-serif]">
      <div className="flex min-h-0 flex-1 pt-px pr-1.5 pl-0.5">
        <SidePanel />
        <main className="relative min-w-0 flex-1 overflow-hidden rounded-r-[10px]">
          <BaseMap />
          <button
            aria-label="Hide side panel"
            className="absolute top-[22px] left-0 flex h-10 w-[37px] items-center rounded-r-full bg-[#666] pb-0.5 pl-1.5 text-[#a0a3ac]"
          >
            <svg viewBox="0 0 19 19" className="size-[19px]" stroke="currentColor" strokeWidth="2.2" strokeLinecap="round" aria-hidden="true">
              <path d="M1.2 1.2l16.6 16.6M17.8 1.2L1.2 17.8" />
            </svg>
          </button>
          <CatalogueDialog />
          <div className="absolute bottom-[50px] left-0 flex h-10 items-center gap-[13px] rounded-r-full bg-white pr-6 pl-1.5 text-[16px] text-[#4b4b4b]">
            <svg viewBox="0 0 25 23" className="h-[23px] w-[25px]" fill="none" stroke="#4b4b4b" strokeWidth="2.3" aria-hidden="true">
              <path d="M5.5 21.5a11.2 11.2 0 1 1 14 0" />
              <path d="M8.6 18a6.7 6.7 0 1 1 7.8 0" />
              <circle cx="12.5" cy="12.6" r="2.4" fill="#4b4b4b" stroke="none" />
            </svg>
            1 dataset enabled on map
          </div>
          <BottomBar />
        </main>
      </div>
      <div className="mt-1 flex h-[3px] shrink-0 bg-linear-to-r from-[#1f3a45] to-[#1b2a4a]">
        <div className="ml-[57px] w-[360px] bg-[#f2f2f2]" />
        <div className="ml-16 w-[123px] bg-[#ad6b33]" />
        <div className="ml-[125px] w-14 bg-[#4f626e]" />
      </div>
    </div>
  );
}
